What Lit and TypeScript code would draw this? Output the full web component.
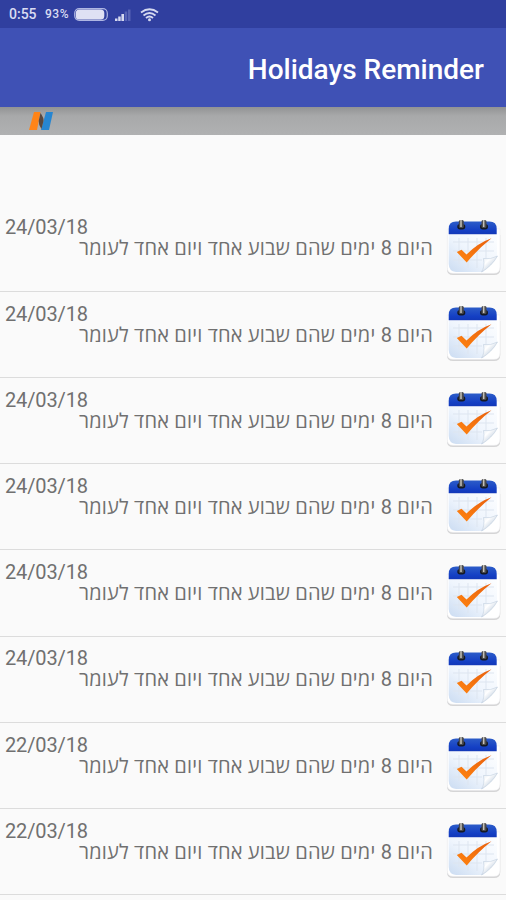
import { LitElement, html, css } from "lit";
import { customElement, property } from "lit/decorators.js";

@customElement("calendar-icon")
class CalendarIcon extends LitElement {
  static styles = css`
    :host { display: block; width: 56px; height: 58px; }
    svg { display: block; }
  `;
  render() {
    return html`<svg width="56" height="58" viewBox="0 0 56 58">
      <defs>
        <linearGradient id="blue" x1="0" y1="0" x2="0" y2="1">
          <stop offset="0" stop-color="#2c5cc8" /><stop offset=".7" stop-color="#143fc4" /><stop offset="1" stop-color="#1238b8" />
        </linearGradient>
        <linearGradient id="paper" x1="1" y1="0" x2="0" y2="1">
          <stop offset="0" stop-color="#fdfeff" /><stop offset=".5" stop-color="#eff5fd" /><stop offset="1" stop-color="#cbdcf2" />
        </linearGradient>
        <linearGradient id="curl" x1="0" y1="0" x2="1" y2="1">
          <stop offset="0" stop-color="#dfe7f0" /><stop offset=".35" stop-color="#ffffff" /><stop offset=".65" stop-color="#cdd8e5" />
        </linearGradient>
        <linearGradient id="tick" x1="0" y1="1" x2="1" y2="0">
          <stop offset="0" stop-color="#ff8410" /><stop offset="1" stop-color="#e8600e" />
        </linearGradient>
      </defs>
      <path d="M1 15V49Q1 55 7 55H48Q54.300 55 54.300 49V15Z" fill="#d5d5d6" />
      <path d="M1.200 9V47Q1.200 53.300 7 53.300H48Q54 53.300 54 47V9Z" fill="#fff" stroke="#f0f0f2" stroke-width=".6" />
      <path d="M2.700 15H51V37L37 52H10Q2.700 51 2.700 44Z" fill="url(#paper)" />
      <path d="M13 18V44M22 18V48M31 18V48M40 18V38M7 22H48M7 31H48M7 40H36" stroke="#dde5f0" stroke-width="1" fill="none" />
      <path d="M2.700 14.200V9Q2.700 1.600 10 1.600H43.500Q50.700 1.600 50.700 9V14.200Z" fill="url(#blue)" />
      <path d="M35.500 52Q39 47 37.500 38.500Q44 40 51.500 36Q46 46 35.500 52Z" fill="url(#curl)" stroke="#b6c6d9" stroke-width=".5" />
      <g>
        <rect x="11.300" y="4" width="8" height="5.500" rx="2.800" fill="#151923" />
        <rect x="12.800" y="0" width="5" height="8" rx="1.500" fill="#4a4b4e" />
        <path d="M15 0V7" stroke="#c5c2ba" stroke-width="1.500" />
        <rect x="34" y="4" width="8" height="5.500" rx="2.800" fill="#151923" />
        <rect x="35.500" y="0" width="5" height="8" rx="1.500" fill="#4a4b4e" />
        <path d="M37.700 0V7" stroke="#c5c2ba" stroke-width="1.500" />
      </g>
      <path d="M10.800 32L15.500 29.800L20.500 34.500Q32 23 45.500 18.300Q32.500 28.500 20.700 42.500Z" fill="url(#tick)" />
    </svg>`;
  }
}

@customElement("holiday-row")
class HolidayRow extends LitElement {
  @property() date = "";
  @property() text = "";
  static styles = css`
    :host {
      display: flex; box-sizing: border-box; flex: 0 0 86.200px;
      padding: 0 4px 0 5px; border-bottom: 1.500px solid #dcdcdc;
      font: 20px/21px Roboto, "Open Sans", "DejaVu Sans", sans-serif; color: #707070;
    }
    .body { flex: 1; padding-top: 11.700px; display: flex; flex-direction: column; }
    .date { letter-spacing: -.12px; }
    .text { direction: rtl; text-align: right; align-self: flex-end; white-space: nowrap; letter-spacing: .2px; }
    .icon { margin: 14.400px 0 0 13px; }
  `;
  render() {
    return html`<div class="body"><span class="date">${this.date}</span><span class="text">${this.text}</span></div>
      <calendar-icon class="icon"></calendar-icon>`;
  }
}

@customElement("app-root")
class AppRoot extends LitElement {
  static styles = css`
    :host { display: flex; flex-direction: column; width: 506px; height: 900px; overflow: hidden; background: #fafafa; font-family: Roboto, sans-serif; }
    .status { flex: 0 0 28px; box-sizing: border-box; background: #303f9f; color: #d9dcf2; display: flex; align-items: center; padding-left: 9px; }
    .time { font-size: 14px; font-weight: 500; width: 36px; }
    .percent { font-size: 12px; font-weight: 500; width: 29px; letter-spacing: .5px; }
    .bar { flex: 0 0 79px; background: #3f51b5; display: flex; align-items: center; justify-content: flex-end; padding: 5px 22px 0 0; box-sizing: border-box; }
    h1 { margin: 0; color: #fff; font-size: 28px; line-height: 34px; font-weight: 500; white-space: nowrap; }
    .ad { flex: 0 0 28px; background: linear-gradient(#929394, #a8a9aa 9px, #b0b1b2); display: flex; align-items: center; padding-left: 29px; box-sizing: border-box; }
    .list { display: flex; flex-direction: column; padding-top: 70.700px; }
    svg { display: block; }
  `;
  private dates = ["24/03/18", "24/03/18", "24/03/18", "24/03/18", "24/03/18", "24/03/18", "22/03/18", "22/03/18"];
  render() {
    return html`
      <div class="status">
        <span class="time">0:55</span><span class="percent">93%</span>
        <svg width="90" height="18" viewBox="0 0 90 18">
          <rect x=".7" y="3.700" width="32.600" height="11.600" rx="4.500" fill="none" stroke="#aeb6e2" stroke-width="1.200" />
          <rect x="1.800" y="4.600" width="28.500" height="9.800" rx="3.500" fill="#dfe1f4" />
          <path d="M41 16V13.500H43.500V16ZM44.200 16V11.500H46.700V16ZM47.400 16V9H50V16Z" fill="#d5d9f0" />
          <path d="M50.700 16V6.500H53.200V16ZM54 16V4.500H56.500V16Z" fill="#5663b5" />
          <g fill="none" stroke="#d5d9f0" stroke-width="1.800"><path d="M67 7.500Q75.500 1 84 7.500M69.500 10.500Q75.500 5.500 81.500 10.500M72 13Q75.500 10 79 13" /></g>
          <circle cx="75.500" cy="14.800" r="1.500" fill="#d5d9f0" />
        </svg>
      </div>
      <div class="bar"><h1>Holidays Reminder</h1></div>
      <div class="ad"><svg width="24" height="18" viewBox="0 0 24 18">
        <path d="M5 0H11.500L8 18H0Z" fill="#ff8418" />
        <path d="M17 0H24L20 18H12Z" fill="#2686d2" />
        <path d="M11.500 1Q15 6 14.500 9L12.500 17Q9.500 13 9.700 9Z" fill="#59483f" />
      </svg></div>
      <div class="list">${this.dates.map((d) => html`<holiday-row date=${d} text="היום 8 ימים שהם שבוע אחד ויום אחד לעומר"></holiday-row>`)}</div>
    `;
  }
}
